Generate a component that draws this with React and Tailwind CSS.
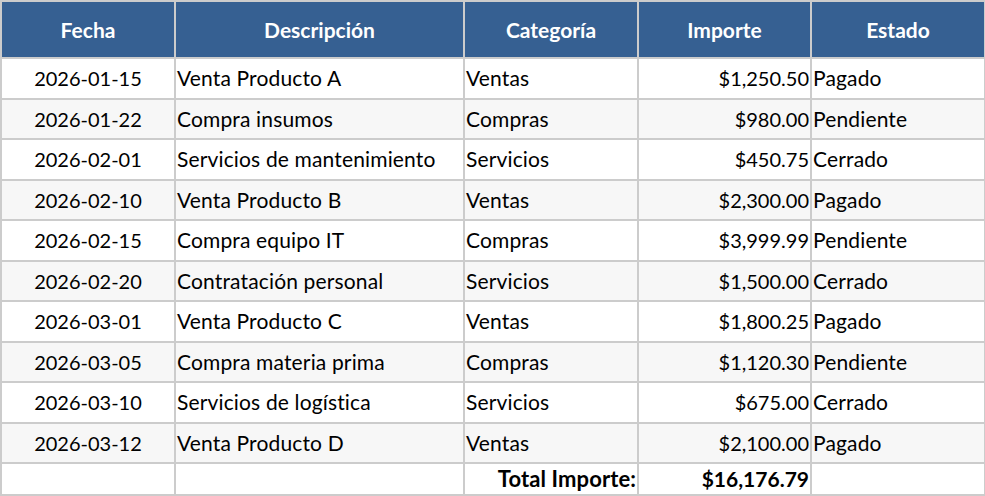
import React from 'react'

const rows = [
  ['2026-01-15', 'Venta Producto A', 'Ventas', '$1,250.50', 'Pagado'],
  ['2026-01-22', 'Compra insumos', 'Compras', '$980.00', 'Pendiente'],
  ['2026-02-01', 'Servicios de mantenimiento', 'Servicios', '$450.75', 'Cerrado'],
  ['2026-02-10', 'Venta Producto B', 'Ventas', '$2,300.00', 'Pagado'],
  ['2026-02-15', 'Compra equipo IT', 'Compras', '$3,999.99', 'Pendiente'],
  ['2026-02-20', 'Contratación personal', 'Servicios', '$1,500.00', 'Cerrado'],
  ['2026-03-01', 'Venta Producto C', 'Ventas', '$1,800.25', 'Pagado'],
  ['2026-03-05', 'Compra materia prima', 'Compras', '$1,120.30', 'Pendiente'],
  ['2026-03-10', 'Servicios de logística', 'Servicios', '$675.00', 'Cerrado'],
  ['2026-03-12', 'Venta Producto D', 'Ventas', '$2,100.00', 'Pagado'],
]

const cell = 'border-2 border-[#cccccc] px-[1px] p-0'
const txt = ' text-[21px] tracking-[0.15px]'

export default function App() {
  return (
    <div className="w-[985px] h-[496px] bg-white font-['Lato',sans-serif] text-[20px] leading-[24px] text-black">
      <table className="border-collapse table-fixed w-[984px]">
        <colgroup>
          <col className="w-[174px]" />
          <col className="w-[289px]" />
          <col className="w-[174px]" />
          <col className="w-[173px]" />
          <col className="w-[174px]" />
        </colgroup>
        <thead>
          <tr className="h-[57px] bg-[#366092] text-white text-[21px] font-bold">
            <th className={cell + ' text-center'}>Fecha</th>
            <th className={cell + ' text-center'}>Descripción</th>
            <th className={cell + ' text-center'}>Categoría</th>
            <th className={cell + ' text-center'}>Importe</th>
            <th className={cell + ' text-center'}>Estado</th>
          </tr>
        </thead>
        <tbody>
          {rows.map((r, i) => (
            <tr key={i} className={'h-[40.5px] ' + (i % 2 ? 'bg-[#f7f7f7]' : 'bg-white')}>
              <td className={cell + ' text-center'}>{r[0]}</td>
              <td className={cell + txt}>{r[1]}</td>
              <td className={cell + txt}>{r[2]}</td>
              <td className={cell + ' text-right'}>{r[3]}</td>
              <td className={cell + txt}>{r[4]}</td>
            </tr>
          ))}
          <tr className="h-[32px] bg-white font-bold text-[21px]">
            <td className={cell}></td>
            <td className={cell}></td>
            <td className={cell + ' text-right text-[22px] tracking-[0.1px]'}>Total Importe:</td>
            <td className={cell + ' text-right'}>$16,176.79</td>
            <td className={cell}></td>
          </tr>
        </tbody>
      </table>
    </div>
  )
}
